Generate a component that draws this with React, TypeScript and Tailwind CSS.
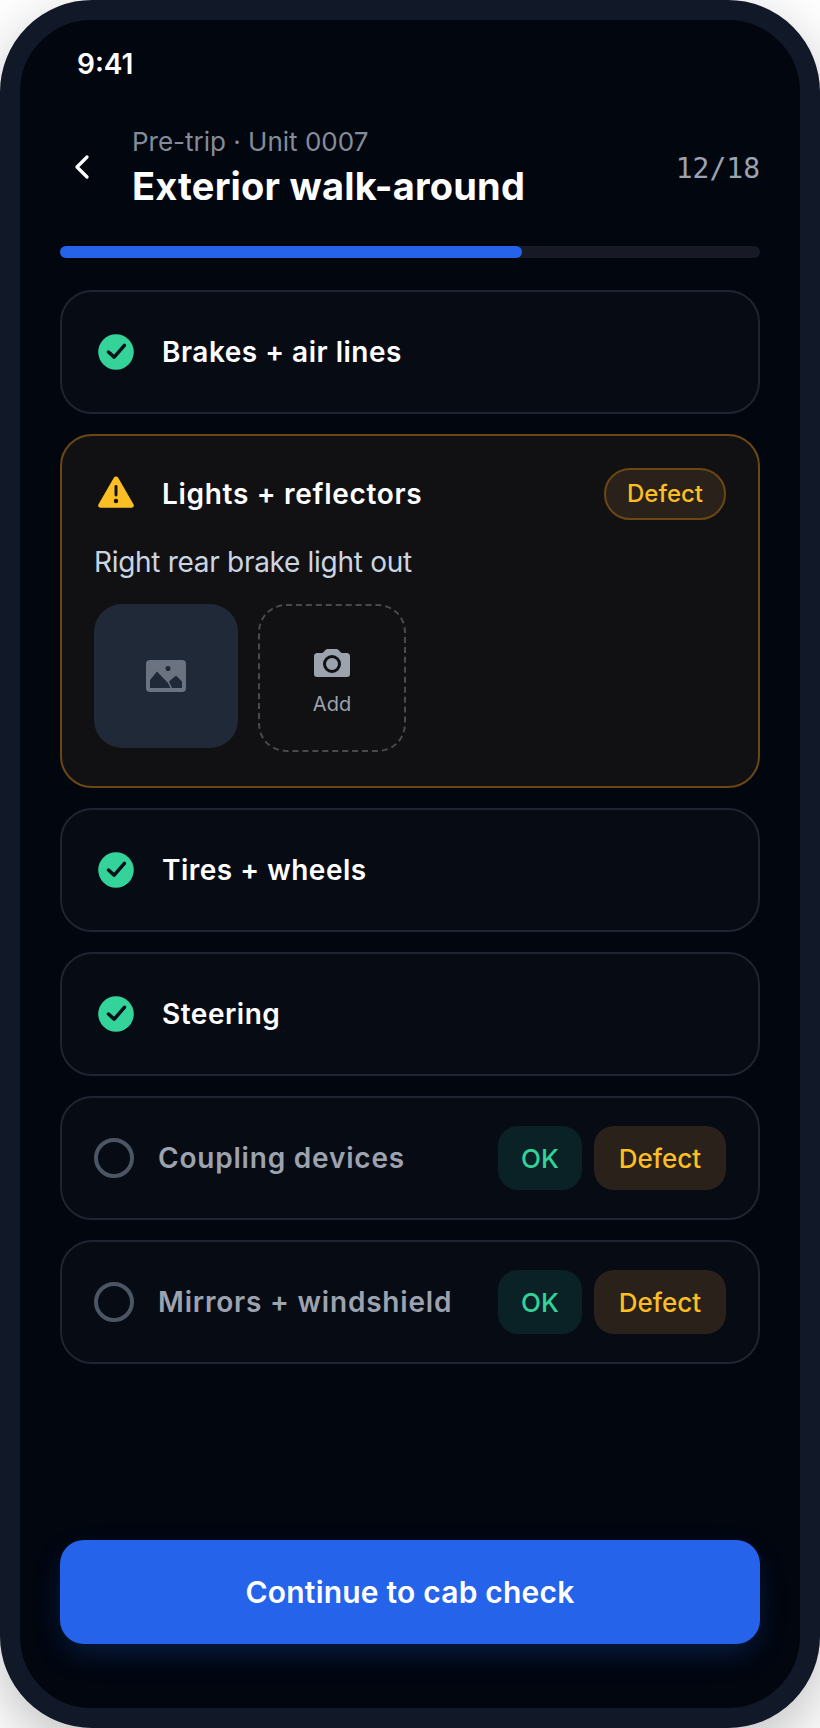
import { ChevronLeft } from 'lucide-react';

const font = 'font-["Inter",sans-serif]';

const CheckIcon = () => (
  <svg viewBox="0 0 24 24" className="h-11 w-11 shrink-0">
    <circle cx="12" cy="12" r="9.7" fill="#34d399" />
    <path d="M7.9 12l3.1 2.8 5.6-6.4" fill="none" stroke="#06101a" strokeWidth="1.9" strokeLinecap="round" strokeLinejoin="round" />
  </svg>
);

const WarnIcon = () => (
  <svg viewBox="0 0 24 24" className="h-11 w-11 shrink-0">
    <path d="M10.8 3.1a1.4 1.4 0 0 1 2.4 0l8.4 14.6a1.2 1.2 0 0 1-1 1.8H3.4a1.2 1.2 0 0 1-1-1.8z" fill="#fbbf24" />
    <path d="M12 7.9v4.6" stroke="#111113" strokeWidth="1.6" strokeLinecap="round" />
    <circle cx="12" cy="15.8" r="1.2" fill="#111113" />
  </svg>
);

const ImageIcon = () => (
  <svg viewBox="0 0 40 32" className="h-8 w-10">
    <rect width="40" height="32" rx="4" fill="#6b7280" />
    <path d="M4 28v-8l7-8.5 11 11.5 2.5 5z" fill="#1f2937" />
    <path d="M26 28l-3-6.5 7-6 6 6V28z" fill="#1f2937" />
    <circle cx="22" cy="8.5" r="2.5" fill="#1f2937" />
  </svg>
);

const CameraIcon = () => (
  <svg viewBox="0 0 36 28" className="h-7 w-9">
    <path d="M11.5 1a3 3 0 0 1 2-1h9a3 3 0 0 1 2 1l3 3h6a3 3 0 0 1 2.5 3v18a3 3 0 0 1-3 3H3a3 3 0 0 1-3-3V7a3 3 0 0 1 2.5-3h6z" fill="#9ca3af" />
    <circle cx="18" cy="15" r="7.5" fill="#9ca3af" stroke="#111113" strokeWidth="3" />
  </svg>
);

const Row = ({ label }: { label: string }) => (
  <div className="flex h-[124px] items-center gap-6 rounded-[32px] border-2 border-[#1f2430] bg-[#070b14] px-8">
    <CheckIcon />
    <span className="text-[28px] font-semibold tracking-[0.5px] text-white">{label}</span>
  </div>
);

const PendingRow = ({ label }: { label: string }) => (
  <div className="flex h-[124px] items-center gap-6 rounded-[32px] border-2 border-[#1f2430] bg-[#070b14] px-8">
    <div className="h-10 w-10 shrink-0 rounded-full border-4 border-[#4b5563]" />
    <span className="flex-1 text-[28px] font-semibold tracking-[0.8px] text-[#9ca3af]">{label}</span>
    <div className="flex gap-3">
      <div className="flex h-16 w-[84px] items-center justify-center rounded-[20px] bg-[#0a2226] text-[26px] font-medium text-[#34d399]">OK</div>
      <div className="flex h-16 w-[132px] items-center justify-center rounded-[20px] bg-[#2a211a] text-[26px] font-medium text-[#fbbf24]">Defect</div>
    </div>
  </div>
);

export default function App() {
  return (
    <div className={`h-[1728px] w-[820px] bg-white ${font}`}>
      <div className="flex h-full flex-col rounded-[92px] border-[20px] border-[#111827] bg-[#01060f] px-10 pb-16 shadow-[0_20px_60px_rgba(0,0,0,0.25)]">
        <div className="pt-6 pl-[17px] text-[28px] leading-10 font-semibold text-white">9:41</div>

        <div className="mt-10 flex items-center">
          <ChevronLeft className="ml-[2px] h-10 w-10 text-white" strokeWidth={2} />
          <div className="ml-[30px] flex-1">
            <div className="text-[26px] leading-9 text-[#858c99]">Pre-trip · Unit 0007</div>
            <div className="mt-[3px] text-[38px] leading-[46px] font-bold tracking-[0.2px] text-white">Exterior walk-around</div>
          </div>
          <div className='mt-[4px] font-["DejaVu_Sans_Mono",monospace] text-[28px] text-[#9ca3af]'>12/18</div>
        </div>

        <div className="mt-[37px] h-3 rounded-full bg-[#171a24]">
          <div className="h-full w-[66%] rounded-full bg-[#2563eb]" />
        </div>

        <div className="mt-8 flex flex-col gap-5">
          <Row label="Brakes + air lines" />

          <div className="flex h-[354px] flex-col rounded-[32px] border-2 border-[#6b4713] bg-[#111113] px-8 pt-[32px]">
            <div className="flex items-center gap-6">
              <WarnIcon />
              <span className="flex-1 text-[28px] font-semibold tracking-[0.7px] text-white">Lights + reflectors</span>
              <span className="flex h-[52px] items-center rounded-full border-2 border-[#6b4713] bg-[#2a211a] px-[21px] text-[24px] font-medium text-[#fbbf24]">Defect</span>
            </div>
            <div className="mt-[22px] text-[28px] leading-10 tracking-[-0.3px] text-[#cbd5e1]">Right rear brake light out</div>
            <div className="mt-[22px] flex gap-5">
              <div className="flex h-[144px] w-[144px] items-center justify-center rounded-[28px] bg-[#1f2937]">
                <ImageIcon />
              </div>
              <div className="flex h-[148px] w-[148px] flex-col items-center justify-center gap-[13px] rounded-[28px] border-2 border-dashed border-[#4a4a4e] pt-[10px]">
                <CameraIcon />
                <span className="text-xl text-[#9ca3af]">Add</span>
              </div>
            </div>
          </div>

          <Row label="Tires + wheels" />
          <Row label="Steering" />
          <PendingRow label="Coupling devices" />
          <PendingRow label="Mirrors + windshield" />
        </div>

        <button className="mt-auto flex h-[104px] items-center justify-center rounded-3xl bg-[#2563eb] text-[30px] font-semibold tracking-[0.2px] text-white shadow-[0_12px_32px_-6px_rgba(37,99,235,0.28)]">
          Continue to cab check
        </button>
      </div>
    </div>
  );
}
